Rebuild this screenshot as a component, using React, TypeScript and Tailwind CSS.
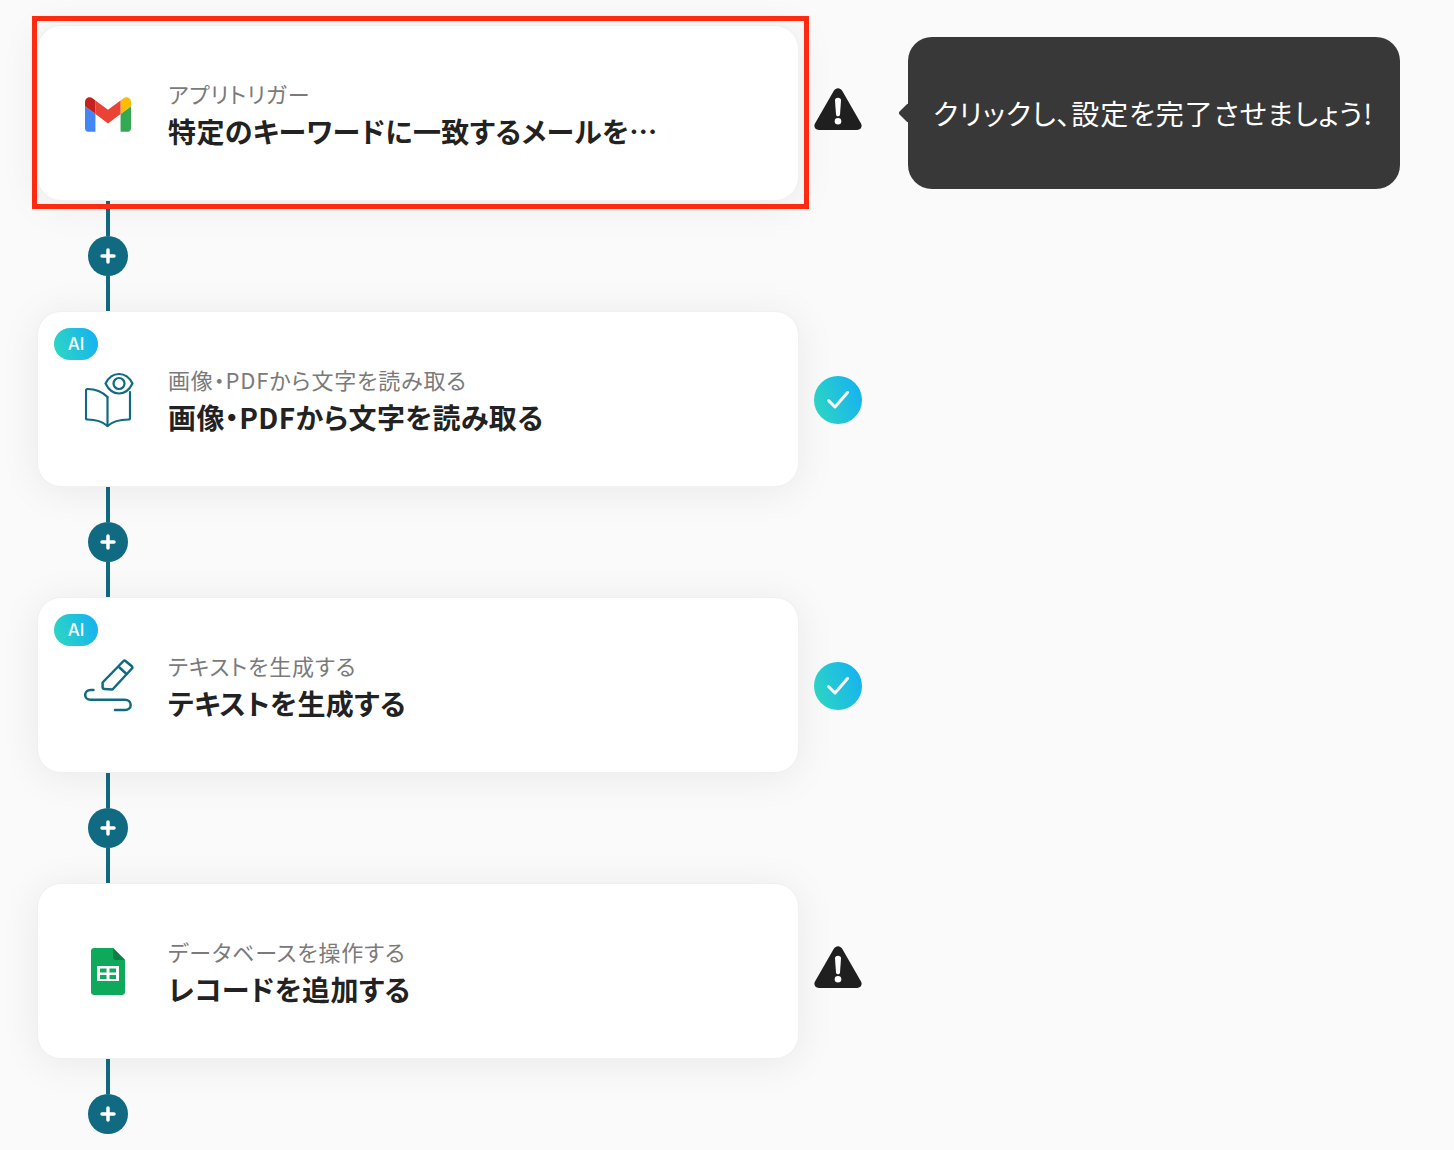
const fontStack = "font-['Noto_Sans_CJK_JP','Noto_Sans',sans-serif] [font-feature-settings:'palt']";

function GmailIcon() {
  return (
    <svg className="translate-y-px" width="46" height="35" viewBox="52 42 88 66">
      <path fill="#4285f4" d="M58 108h14V74L52 59v43c0 3.32 2.69 6 6 6" />
      <path fill="#34a853" d="M120 108h14c3.32 0 6-2.69 6-6V59l-20 15" />
      <path fill="#fbbc04" d="M120 48v26l20-15v-8c0-7.42-8.47-11.65-14.4-7.2" />
      <path fill="#ea4335" d="M72 74V48l24 18 24-18v26L96 92" />
      <path fill="#c5221f" d="M52 51v8l20 15V48l-5.6-4.2c-5.94-4.45-14.4-.22-14.4 7.2" />
    </svg>
  );
}

function BookIcon() {
  return (
    <svg className="translate-x-[1.5px] translate-y-px" width="50" height="56" viewBox="0 0 50 56" fill="none" stroke="#0f6a82" strokeWidth="2.2" strokeLinecap="round" strokeLinejoin="round">
      <path d="M23 25C18 20 10 17 3 17c-1 0-1.500.5-1.500 1.500V46c0 1 .5 1.500 1.500 1.500 8 0 15 2 20 6.500 5-4.500 12-6.500 21-6.500 1 0 1.500-.5 1.500-1.500V20" />
      <path d="M23 25v29" />
      <path d="M21 11.500C24 5.500 29 2 34.500 2S45 5.500 48 11.500C45 17.500 40 21.500 34.500 21.500S24 17.500 21 11.500Z" fill="#fff" />
      <circle cx="34.500" cy="11.500" r="5.500" />
    </svg>
  );
}

function PenIcon() {
  return (
    <svg className="translate-x-px translate-y-px" width="50" height="54" viewBox="0 0 50 54" fill="none" stroke="#0f6a82" strokeWidth="2.500" strokeLinecap="round" strokeLinejoin="round">
      <path d="M41.500 2 47.800 7.300C48.500 8 48.500 8.800 47.900 9.500L28.500 30.500 20.500 30C19.300 29.900 18.600 29.200 18.600 28L18.600 23.500 39.500 2C40 1.500 40.900 1.500 41.500 2Z" />
      <path d="M35.500 8.500 42.500 15" />
      <path d="M9.500 31H6.500C3.500 31 1.200 33.300 1.200 36S3.500 40.800 6.500 40.800H41C44.200 40.800 46.700 43 46.700 46S44.200 51 41 51H31" />
    </svg>
  );
}

function SheetsIcon() {
  return (
    <svg width="34" height="47" viewBox="0 0 34 47">
      <path fill="#0fa95b" d="M3 0H22L34 12V44C34 45.700 32.700 47 31 47H3C1.300 47 0 45.700 0 44V3C0 1.300 1.300 0 3 0Z" />
      <path fill="#0c8043" d="M22 0 34 12H25C23.300 12 22 10.700 22 9Z" />
      <path fill="#fff" d="M6 18H28V33H6ZM9 20.500V24.500H15.500V20.500ZM18.500 20.500V24.500H25V20.500ZM9 27V31H15.500V27ZM18.500 27V31H25V27Z" fillRule="evenodd" />
    </svg>
  );
}

function WarningIcon() {
  return (
    <svg className="-translate-y-[4px]" width="48" height="42" viewBox="0 0 48 42">
      <path fill="#1f1f1f" d="M19.800 2.800C21.700-.7 26.300-.7 28.200 2.800L47 35.500C48.800 38.500 46.700 42 43.200 42H4.800C1.300 42-.8 38.500 1 35.500Z" />
      <path fill="#fff" d="M21 12.500C20.900 10.900 22.300 9.800 24 9.800S27.100 10.900 27 12.500L26 26.500C25.900 27.600 25.100 28.300 24 28.300S22.100 27.600 22 26.500Z" />
      <circle cx="24" cy="33.300" r="3.300" fill="#fff" />
    </svg>
  );
}

function CheckIcon() {
  return (
    <div className="flex h-12 w-12 translate-y-px items-center justify-center rounded-full bg-[linear-gradient(70deg,#2fd8bf,#14aff5)]">
      <svg width="24" height="20" viewBox="0 0 24 20" fill="none" stroke="#fff" strokeWidth="3" strokeLinecap="round" strokeLinejoin="round">
        <path d="M2.500 10.500 9 17 21.500 2.500" />
      </svg>
    </div>
  );
}

function Connector({ last }: { last?: boolean }) {
  return (
    <div className="ml-[51px] flex w-10 flex-col items-center">
      <div className="h-[35px] w-1 bg-[#0f6a82]" />
      <div className="flex h-10 w-10 items-center justify-center rounded-full bg-[#0f6a82]">
        <svg width="16" height="16" viewBox="0 0 16 16" stroke="#fff" strokeWidth="3.500" strokeLinecap="round">
          <path d="M8 2v12M2 8h12" />
        </svg>
      </div>
      {!last && <div className="h-[35px] w-1 bg-[#0f6a82]" />}
    </div>
  );
}

type StepProps = {
  icon: React.ReactNode;
  label: string;
  title: string;
  ai?: boolean;
  selected?: boolean;
  status: "warning" | "done";
  children?: React.ReactNode;
};

function Step({ icon, label, title, ai, selected, status, children }: StepProps) {
  return (
    <div className="flex items-center">
      <div className="relative flex h-[176px] w-[762px] items-center rounded-3xl border border-[#f0f0f0] bg-white pl-[40px] shadow-[0_4px_40px_rgba(0,0,0,0.07)]">
        {selected && (
          <div className="pointer-events-none absolute top-[-10px] right-[-11px] bottom-[-9px] left-[-6px] border-[5px] border-[#ff2a10]" />
        )}
        {ai && (
          <div className="absolute top-[16px] left-[16px] flex h-8 w-11 items-center justify-center rounded-full bg-[linear-gradient(70deg,#2fd8bf,#14aff5)] pt-px font-['Inter',sans-serif] text-[17px] font-medium text-white">
            AI
          </div>
        )}
        <div className="flex w-[60px] shrink-0 items-center justify-center">{icon}</div>
        <div className="ml-[30px] flex flex-col pt-[3px]">
          <div className="text-[22px] leading-[32px] tracking-[0.85px] text-[#7a7a7a]">{label}</div>
          <div className="mt-[1px] text-[28px] leading-[42px] font-bold tracking-[0.4px] text-[#222222]">{title}</div>
        </div>
      </div>
      <div className="ml-[15px] flex w-12 justify-center">
        {status === "warning" ? <WarningIcon /> : <CheckIcon />}
      </div>
      {children}
    </div>
  );
}

export default function App() {
  return (
    <div className={`h-[1150px] w-full overflow-hidden bg-[#fafafa] pt-[25px] pl-[37px] ${fontStack}`}>
      <Step
        selected
        icon={<GmailIcon />}
        label="アプリトリガー"
        title="特定のキーワードに一致するメールを…"
        status="warning"
      >
        <div className="relative ml-[46px] flex h-[152px] w-[492px] items-center rounded-3xl bg-[#383838] pl-[25px] text-[28px] tracking-[0.9px] text-white">
          <div className="absolute top-1/2 left-[-7px] h-[14px] w-[14px] -translate-y-1/2 rotate-45 rounded-[2px] bg-[#383838]" />
          <span className="relative">クリックし、設定を完了させましょう!</span>
        </div>
      </Step>
      <Connector />
      <Step ai icon={<BookIcon />} label="画像・PDFから文字を読み取る" title="画像・PDFから文字を読み取る" status="done" />
      <Connector />
      <Step ai icon={<PenIcon />} label="テキストを生成する" title="テキストを生成する" status="done" />
      <Connector />
      <Step icon={<SheetsIcon />} label="データベースを操作する" title="レコードを追加する" status="warning" />
      <Connector last />
    </div>
  );
}
